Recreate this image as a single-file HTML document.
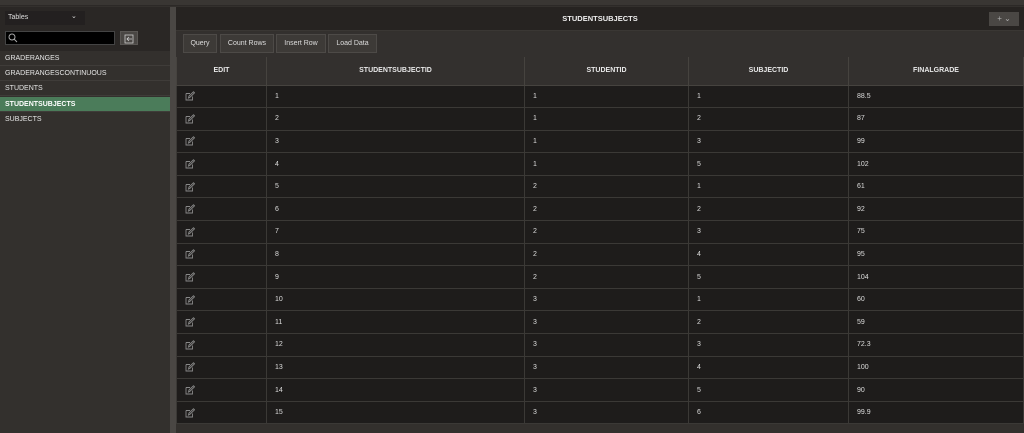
<!DOCTYPE html><html><head><style>
*{margin:0;padding:0;box-sizing:border-box}
body{width:1024px;height:433px;background:#33302d;font-family:"Liberation Sans",sans-serif;color:#ddd;position:relative;overflow:hidden}
.a{position:absolute}
.side .it{position:absolute;left:0;width:170px;height:15px;font-size:7px;line-height:15px;padding-left:5px;color:#e6e6e6;border-bottom:1px solid #3f3c39}
.btn{position:absolute;top:34px;height:19px;background:#3d3a37;border:1px solid #4d4a47;font-size:7px;line-height:17px;text-align:center;color:#ddd}
table{position:absolute;left:176px;top:57px;width:848px;border-collapse:collapse;font-size:7px}
th{height:28px;background:#33302e;color:#e8e8e8;font-weight:bold;border:1px solid #46433f;border-top:none}
td{height:22.6px;background:#1e1c1b;border:1px solid #3b3936;color:#ddd;padding-left:8px}
td svg{display:block}
</style></head><body>
<div class="a" style="left:0;top:0;width:1024px;height:6px;background:#393633;border-bottom:1px solid #2c2927"></div>
<div class="a" style="left:0;top:7px;width:170px;height:44px;background:#2a2725"></div>
<div class="a" style="left:5px;top:11px;width:80px;height:14px;background:#232020;font-size:7px;line-height:14px;padding-left:3px;color:#ddd">Tables<span style="position:absolute;left:66px;top:-1px;font-size:7px">&#8964;</span></div>
<div class="a" style="left:5px;top:31px;width:110px;height:14px;background:#000;border:1px solid #444"><svg width="10" height="10" style="position:absolute;left:2px;top:1px"><circle cx="4" cy="4" r="3" fill="none" stroke="#aaa"/><line x1="6" y1="6" x2="9" y2="9" stroke="#aaa"/></svg></div>
<div class="a" style="left:120px;top:31px;width:18px;height:14px;background:#4a4744;border:1px solid #5a5754"><svg width="16" height="12"><rect x="4" y="2" width="8" height="8" fill="none" stroke="#ccc" stroke-width=".8"/><path d="M11 6H6M8 4L6 6 8 8" stroke="#ccc" fill="none" stroke-width=".8"/></svg></div>
<div class="side">
<div class="it" style="top:51px">GRADERANGES</div>
<div class="it" style="top:66px">GRADERANGESCONTINUOUS</div>
<div class="it" style="top:81px">STUDENTS</div>
<div class="it" style="top:97px;background:#4b7c5a;font-weight:bold;color:#fff">STUDENTSUBJECTS</div>
<div class="it" style="top:112px;border:none">SUBJECTS</div>
</div>
<div class="a" style="left:170px;top:7px;width:6px;height:426px;background:#4a4744"></div>
<div class="a" style="left:176px;top:7px;width:848px;height:24px;background:#262321;border-bottom:1px solid #3a3734;text-align:center;font-size:7.5px;font-weight:bold;line-height:24px;color:#eee">STUDENTSUBJECTS</div>
<div class="a" style="left:989px;top:12px;width:30px;height:14px;background:#4a4744;font-size:8px;color:#aaa;text-align:center;line-height:13px">+ &#8964;</div>
<div class="a" style="left:176px;top:32px;width:848px;height:25px;background:#33302e"></div>
<div class="btn" style="left:183px;width:34px">Query</div>
<div class="btn" style="left:220px;width:54px">Count Rows</div>
<div class="btn" style="left:276px;width:50px">Insert Row</div>
<div class="btn" style="left:328px;width:49px">Load Data</div>
<table>
<tr><th style="width:90px">EDIT</th><th style="width:258px">STUDENTSUBJECTID</th><th style="width:164px">STUDENTID</th><th style="width:160px">SUBJECTID</th><th>FINALGRADE</th></tr>
</table>
<script>
var d=[[1,1,1,"88.5"],[2,1,2,"87"],[3,1,3,"99"],[4,1,5,"102"],[5,2,1,"61"],[6,2,2,"92"],[7,2,3,"75"],[8,2,4,"95"],[9,2,5,"104"],[10,3,1,"60"],[11,3,2,"59"],[12,3,3,"72.3"],[13,3,4,"100"],[14,3,5,"90"],[15,3,6,"99.9"]];
var t=document.querySelector("table"),h="";
d.forEach(function(r){h+='<tr><td><svg width="10" height="10"><path d="M1 2.5H5M1 2.5V9H7.5V5.5" fill="none" stroke="#888" stroke-width=".9"/><path d="M3.5 7L4 5 8.5 .8 9.5 1.8 5 6.2Z" fill="none" stroke="#888" stroke-width=".9"/></svg></td><td>'+r[0]+'</td><td>'+r[1]+'</td><td>'+r[2]+'</td><td>'+r[3]+'</td></tr>'});
t.insertAdjacentHTML("beforeend",h);
</script>
</body></html>
